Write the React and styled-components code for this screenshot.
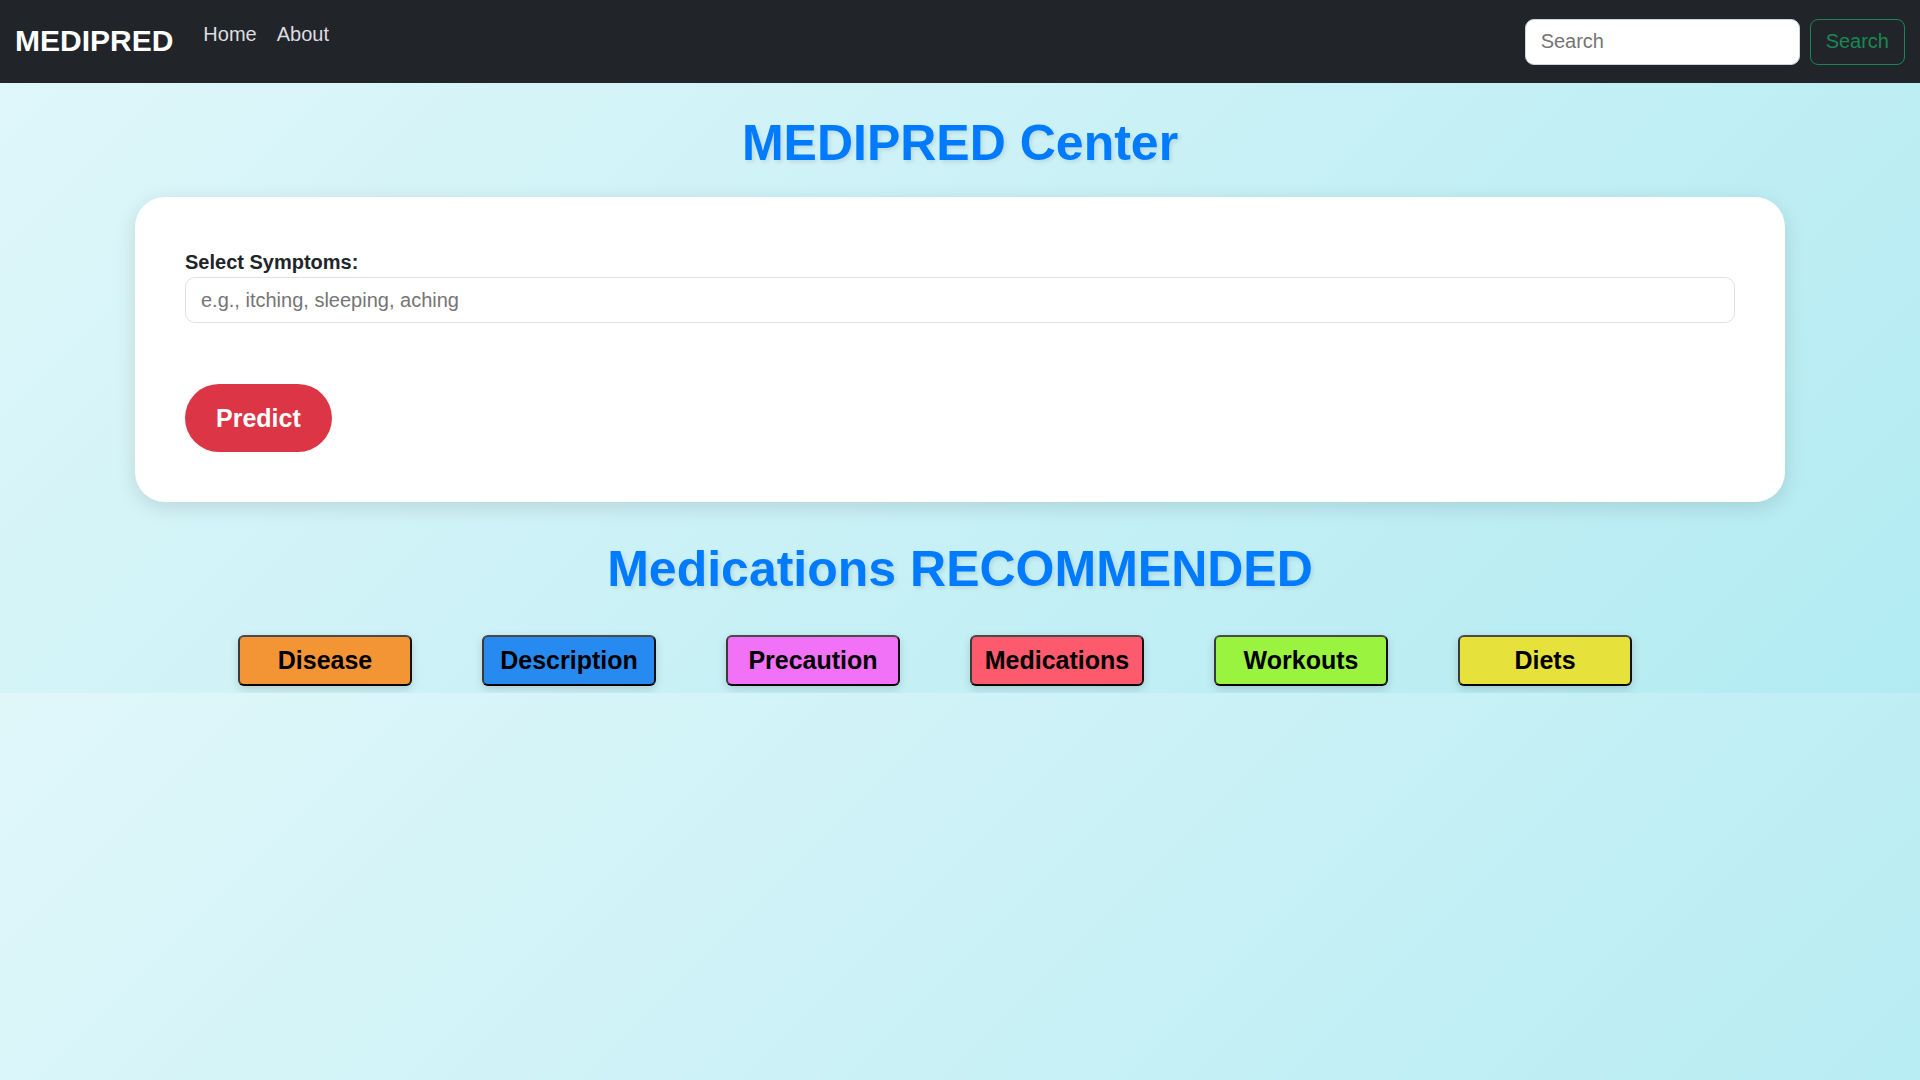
import React from 'react'
import styled, { createGlobalStyle } from 'styled-components'

const GlobalStyle = createGlobalStyle`
	* {
		box-sizing: border-box;
	}

	body {
		margin: 0;
		font-family: 'Liberation Sans', Arial, sans-serif;
		color: #212529;
		background: linear-gradient(135deg, #e0f7fa 0%, #b2ebf2 100%);
	}
`

const Navbar = styled.nav`
	height: 83px;
	display: flex;
	align-items: center;
	padding: 0 15px;
	background-color: #212529;

	.brand {
		margin-top: -3px;
		margin-right: 20px;
		font-size: 30px;
		line-height: 45px;
		font-weight: bold;
		color: #fff;
	}

	.links {
		align-self: flex-start;
		display: flex;
		padding-top: 19px;

		a {
			padding: 0 10px;
			font-size: 20px;
			line-height: 30px;
			color: #dcdde0;
			text-decoration: none;
		}
	}

	form {
		margin-left: auto;
		display: flex;
		gap: 10px;
	}
`

const SearchInput = styled.input`
	width: 275px;
	height: 46px;
	padding: 0 15px;
	border: 1px solid #ced4da;
	border-radius: 9px;
	font-family: inherit;
	font-size: 20px;
	color: #212529;
	outline: none;

	::placeholder {
		color: #6c757d;
	}
`

const OutlineButton = styled.button`
	height: 46px;
	padding: 0 15px;
	border: 1px solid #198754;
	border-radius: 8px;
	background-color: transparent;
	font-family: inherit;
	font-size: 20px;
	color: #198754;
`

const Main = styled.main`
	display: flex;
	flex-direction: column;
	align-items: center;
	padding-bottom: 7px;
`

const Title = styled.h1`
	margin: ${(p) => p.$top}px 0 0;
	font-size: 50px;
	line-height: 60px;
	font-weight: bold;
	color: #007bff;
	text-shadow: 2px 2px 4px rgba(0, 0, 0, 0.1);
`

const Card = styled.section`
	width: 1650px;
	margin-top: 24px;
	padding: 50px;
	background-color: #fff;
	border-radius: 30px;
	box-shadow: 0 5px 20px rgba(0, 0, 0, 0.12);

	label {
		display: block;
		font-size: 20px;
		line-height: 30px;
		font-weight: bold;
		color: #212529;
	}

	input {
		display: block;
		width: 100%;
		height: 46px;
		padding: 0 15px;
		border: 1px solid #dee2e6;
		border-radius: 10px;
		font-family: inherit;
		font-size: 20px;
		outline: none;

		::placeholder {
			color: #6c757d;
		}
	}
`

const PredictButton = styled.button`
	display: block;
	margin-top: 61px;
	height: 68px;
	padding: 0 31px;
	border: none;
	border-radius: 34px;
	background-color: #dc3545;
	font-family: inherit;
	font-size: 25px;
	font-weight: bold;
	color: #fff;
`

const ToggleRow = styled.div`
	display: flex;
	justify-content: center;
	gap: 70px;
	width: 100%;
	margin-top: 36px;
	padding-right: 50px;
`

const ToggleButton = styled.button`
	width: 174px;
	height: 51px;
	padding: 0;
	border: 2px solid;
	border-color: #4a4a4a #111 #050505 #3a3a3a;
	border-radius: 6px;
	background-color: ${(p) => p.$color};
	box-shadow: 0 3px 8px rgba(0, 0, 0, 0.15);
	font-family: inherit;
	font-size: 25px;
	font-weight: bold;
	color: #000;
`

const sections = [
	{ label: 'Disease', color: '#f39435' },
	{ label: 'Description', color: '#278af0' },
	{ label: 'Precaution', color: '#f272f7' },
	{ label: 'Medications', color: '#fd5a6e' },
	{ label: 'Workouts', color: '#9af43f' },
	{ label: 'Diets', color: '#e6e13b' },
]

const App = () => {
	return (
		<>
			<GlobalStyle />
			<Navbar>
				<span className='brand'>MEDIPRED</span>
				<div className='links'>
					<a href='#home'>Home</a>
					<a href='#about'>About</a>
				</div>
				<form onSubmit={(e) => e.preventDefault()}>
					<SearchInput type='search' placeholder='Search' />
					<OutlineButton type='submit'>Search</OutlineButton>
				</form>
			</Navbar>
			<Main>
				<Title $top={30}>MEDIPRED Center</Title>
				<Card>
					<label htmlFor='symptoms'>Select Symptoms:</label>
					<input id='symptoms' type='text' placeholder='e.g., itching, sleeping, aching' />
					<PredictButton type='button'>Predict</PredictButton>
				</Card>
				<Title $top={37}>Medications RECOMMENDED</Title>
				<ToggleRow>
					{sections.map((s) => (
						<ToggleButton key={s.label} type='button' $color={s.color}>
							{s.label}
						</ToggleButton>
					))}
				</ToggleRow>
			</Main>
		</>
	)
}

export default App
